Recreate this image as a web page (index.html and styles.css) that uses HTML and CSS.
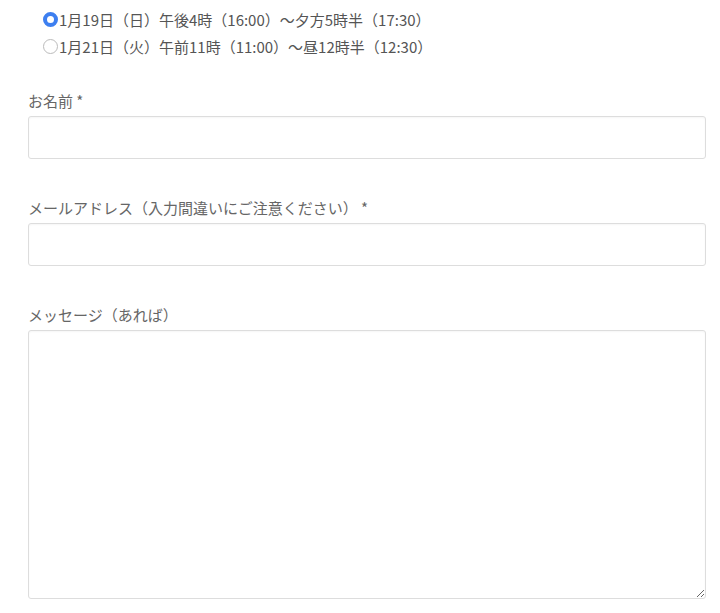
FILE: index.html
```html
<!DOCTYPE html>
<html lang="ja">
<head>
    <meta charset="UTF-8">
    <meta name="viewport" content="width=device-width, initial-scale=1.0">
    <title>お申し込みフォーム</title>
    <link rel="stylesheet" href="styles.css">
</head>
<body>
    <form class="form">
        <div class="dates">
            <label class="date">
                <input type="radio" name="date" checked>
                <span>1月19日（日）午後4時（16:00）～夕方5時半（17:30）</span>
            </label>
            <label class="date">
                <input type="radio" name="date">
                <span>1月21日（火）午前11時（11:00）～昼12時半（12:30）</span>
            </label>
        </div>

        <div class="field">
            <label for="name">お名前 *</label>
            <input type="text" id="name">
        </div>

        <div class="field">
            <label for="email">メールアドレス（入力間違いにご注意ください） *</label>
            <input type="email" id="email">
        </div>

        <div class="field">
            <label for="message">メッセージ（あれば）</label>
            <textarea id="message"></textarea>
        </div>
    </form>
</body>
</html>
```

FILE: styles.css
```css
body {
    font-family: "Noto Sans CJK JP", "Noto Sans", sans-serif;
    margin: 0;
    padding: 0;
    background-color: #fff;
    color: #555;
    font-size: 15px;
}
.form {
    padding: 0 14px 0 28px;
}
.dates {
    padding: 6px 0 0 15px;
    display: flex;
    flex-direction: column;
}
.date {
    display: flex;
    align-items: center;
    height: 27px;
    color: #555;
}
.date input {
    appearance: none;
    width: 15px;
    height: 15px;
    margin: 0 1px 0 0;
    border: 1px solid #bbb;
    border-radius: 50%;
    box-sizing: border-box;
}
.date input:checked {
    border: 4px solid #3d7ff0;
    background-color: #fff;
}
.field {
    margin-top: 30px;
}
.field + .field {
    margin-top: 38px;
}
.field label {
    display: block;
    color: #666;
    line-height: 22px;
    margin-bottom: 4px;
}
.field input,
.field textarea {
    display: block;
    width: 100%;
    height: 43px;
    border: 1px solid #ddd;
    border-radius: 3px;
    box-sizing: border-box;
    box-shadow: inset 0 1px 2px rgba(0, 0, 0, 0.04);
    font: inherit;
}
.field textarea {
    height: 269px;
    resize: both;
}
```
